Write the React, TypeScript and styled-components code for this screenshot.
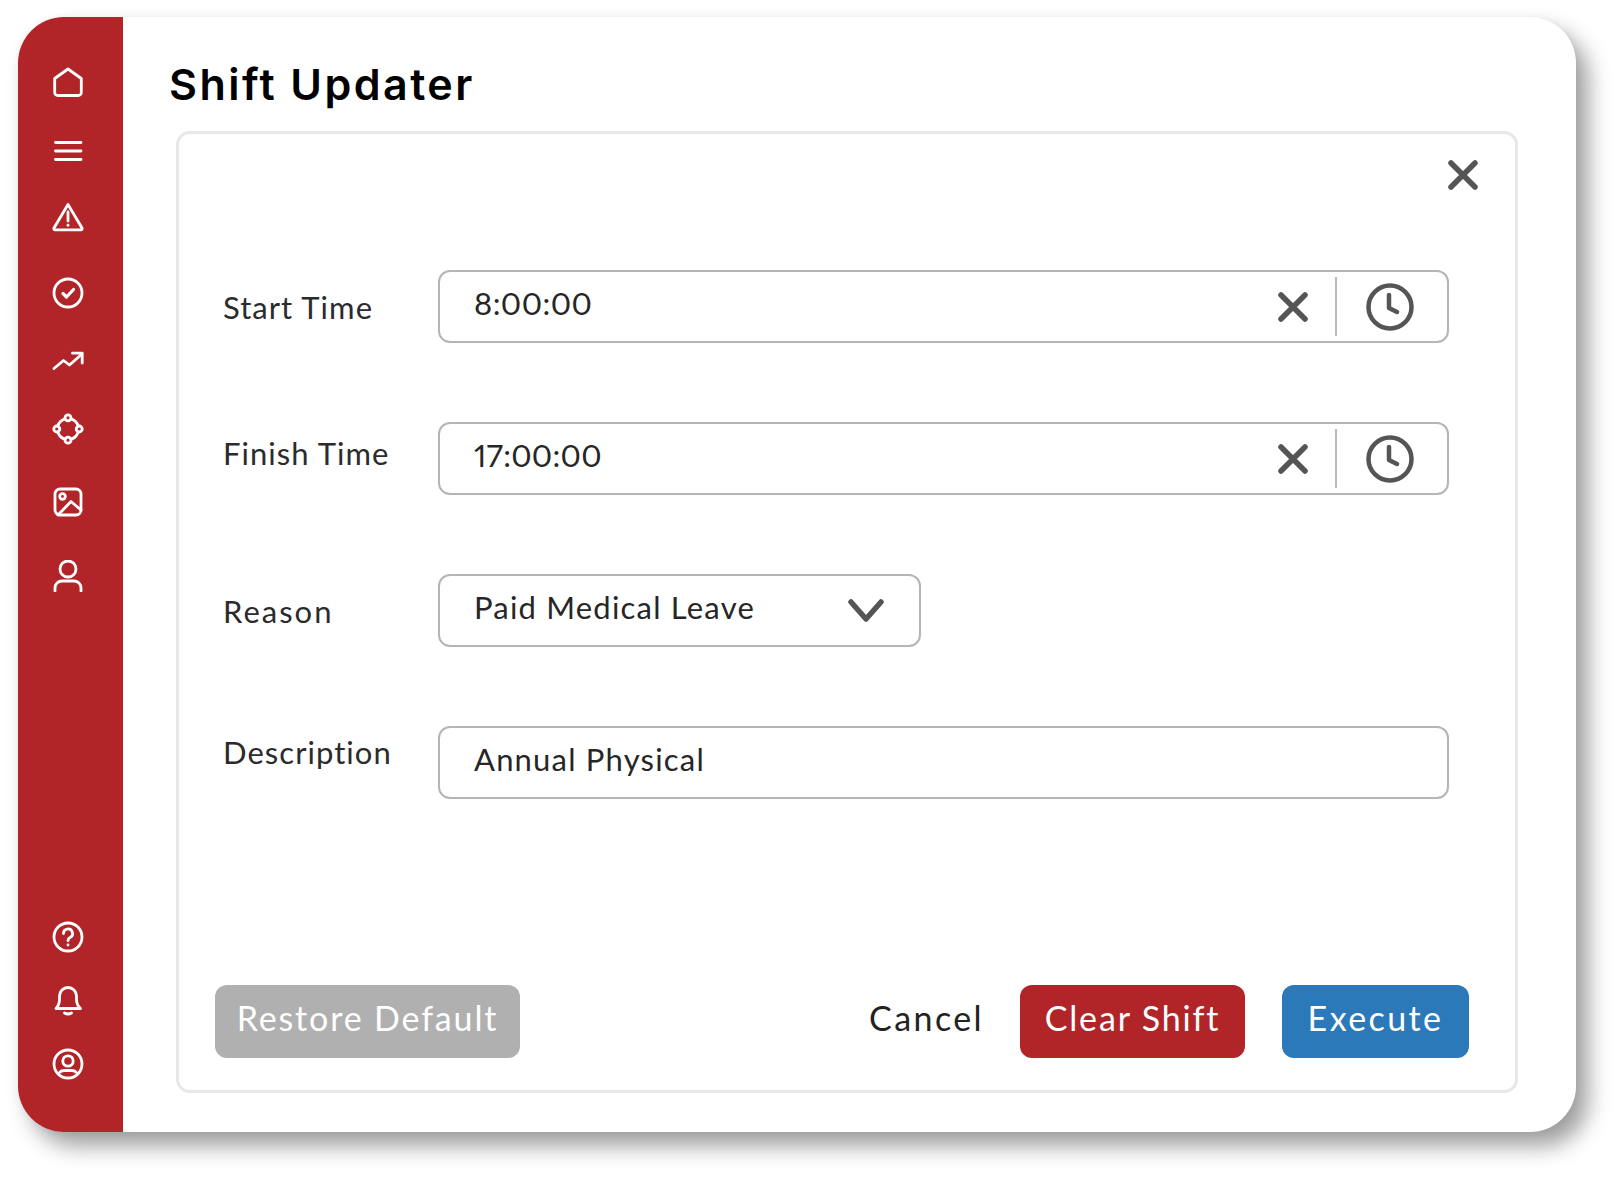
import React from "react";
import styled, { createGlobalStyle } from "styled-components";

const Global = createGlobalStyle`
  html, body { margin: 0; padding: 0; background: #fff; }
  body { font-family: "Lato", "Liberation Sans", sans-serif; }
`;

const Page = styled.div`
  width: 1624px;
  height: 1178px;
  padding: 17px 48px 46px 18px;
  box-sizing: border-box;
  overflow: hidden;
`;

const Card = styled.div`
  display: flex;
  height: 100%;
  background: #fff;
  border-radius: 46px;
  overflow: hidden;
  box-shadow: 12px 14px 22px rgba(0, 0, 0, 0.38), 0 0 8px rgba(0, 0, 0, 0.04);
`;

const Sidebar = styled.nav`
  width: 105px;
  flex: none;
  background: #b12528;
  display: flex;
  flex-direction: column;
  align-items: center;
  padding: 49px 5px 52px 0;
  box-sizing: border-box;
`;

const NavIcon = styled.svg<{ $gap?: number }>`
  width: 32px;
  height: 32px;
  flex: none;
  margin-top: ${(p) => p.$gap ?? 0}px;
  fill: none;
  stroke: #fff;
  stroke-width: 2.8;
  stroke-linecap: round;
  stroke-linejoin: round;
`;

const Spacer = styled.div`
  flex: 1;
`;

const Main = styled.main`
  flex: 1;
  display: flex;
  flex-direction: column;
  padding: 0 58px 39px 46px;
  min-width: 0;
`;

const Title = styled.h1`
  margin: 0;
  height: 114px;
  line-height: 134px;
  font-family: "Inter", "Liberation Sans", sans-serif;
  font-size: 43px;
  font-weight: 600;
  letter-spacing: 2.45px;
  color: #000;
`;

const Panel = styled.section`
  flex: 1;
  margin-left: 7px;
  border: 3px solid #e8e8e8;
  border-radius: 14px;
  display: flex;
  flex-direction: column;
  padding: 0 46px 32px 36px;
`;

const CloseRow = styled.div`
  display: flex;
  justify-content: flex-end;
  height: 136px;
  padding: 26px 0 0;
  box-sizing: border-box;
  margin-right: -9px;
`;

const Glyph = styled.svg`
  fill: none;
  stroke: #555;
  stroke-linecap: round;
  stroke-linejoin: round;
  flex: none;
`;

const Form = styled.div`
  display: grid;
  grid-template-columns: 214px 1011px;
  row-gap: 79px;
  padding-left: 9px;
`;

const Label = styled.label<{ $shift: number; $tracking?: number }>`
  align-self: center;
  margin-left: -1px;
  font-size: 31px;
  letter-spacing: ${(p) => p.$tracking ?? 1.05}px;
  color: #2b2b2b;
  padding-top: ${(p) => Math.max(p.$shift, 0)}px;
  padding-bottom: ${(p) => Math.max(-p.$shift, 0)}px;
`;

const Field = styled.div<{ $narrow?: boolean }>`
  height: 73px;
  width: ${(p) => (p.$narrow ? "483px" : "100%")};
  box-sizing: border-box;
  border: 2px solid #b5b5b5;
  border-radius: 12px;
  display: flex;
  align-items: center;
  padding-left: 34px;
`;

const Value = styled.span<{ $tracking?: number }>`
  flex: 1;
  font-size: 31px;
  letter-spacing: ${(p) => p.$tracking ?? 1.2}px;
  font-variant-numeric: proportional-nums;
  color: #262626;
  padding-bottom: 8px;
`;

const ClearGlyph = styled(Glyph)`
  width: 30px;
  height: 30px;
  stroke-width: 5.5;
`;

const Divider = styled.div`
  width: 2px;
  height: 59px;
  background: #bbb;
  margin: 0 28px 0 27px;
`;

const ClockGlyph = styled(Glyph)`
  width: 50px;
  height: 50px;
  stroke-width: 4.5;
  margin-right: 32px;
`;

const ChevronGlyph = styled(Glyph)`
  width: 38px;
  height: 26px;
  stroke-width: 5.5;
  margin-right: 34px;
`;

const Footer = styled.div`
  margin-top: auto;
  display: flex;
  align-items: center;
`;

const Button = styled.button<{ $bg: string; $width: number }>`
  width: ${(p) => p.$width}px;
  height: 73px;
  padding: 0 0 8px;
  border: 0;
  border-radius: 12px;
  background: ${(p) => p.$bg};
  color: #fff;
  font-family: inherit;
  font-size: 34px;
  letter-spacing: 1.85px;
`;

const Cancel = styled.span`
  margin-left: auto;
  margin-right: 36px;
  font-size: 34px;
  letter-spacing: 2.4px;
  color: #222;
  padding-bottom: 8px;
`;

const ExecuteButton = styled(Button)`
  margin-left: 37px;
  letter-spacing: 2.4px;
`;

const Clear = () => (
  <ClearGlyph viewBox="0 0 30 30">
    <path d="M3 3 L27 27 M27 3 L3 27" />
  </ClearGlyph>
);

const Clock = () => (
  <ClockGlyph viewBox="0 0 50 50">
    <circle cx="25" cy="25" r="21.5" />
    <path d="M24 13 V26 L32 30" />
  </ClockGlyph>
);

export default function App() {
  return (
    <Page>
      <Global />
      <Card>
        <Sidebar>
          <NavIcon viewBox="0 0 32 32">
            <path d="M2.7 12.5 L16 3 L29.3 12.5 V26.5 a3 3 0 0 1 -3 3 H5.7 a3 3 0 0 1 -3 -3 Z" />
          </NavIcon>
          <NavIcon viewBox="0 0 32 32" $gap={37}>
            <path d="M3.5 7.5 H29 M3.5 16 H29 M3.5 24.5 H29" />
          </NavIcon>
          <NavIcon viewBox="0 0 32 32" $gap={34}>
            <path d="M16 3.5 L30 27 a1.2 1.2 0 0 1 -1.2 1.8 H3.2 a1.2 1.2 0 0 1 -1.2 -1.8 Z" />
            <path d="M16 11 V20" />
            <path d="M16 24.2 V24.3" />
          </NavIcon>
          <NavIcon viewBox="0 0 32 32" $gap={44}>
            <circle cx="16" cy="16" r="14" />
            <path d="M11 16.5 L14.5 20 L21.5 12.5" strokeWidth="3.2" />
          </NavIcon>
          <NavIcon viewBox="0 0 32 32" $gap={35}>
            <path d="M2 24.5 L11.5 16.5 L17.5 21 L30 10" />
            <path d="M20.5 9.2 H30.2 V19" />
          </NavIcon>
          <NavIcon viewBox="0 0 32 32" $gap={37}>
            <circle cx="16" cy="4.8" r="3" />
            <circle cx="16" cy="27.2" r="3" />
            <circle cx="4.8" cy="16" r="3" />
            <circle cx="27.2" cy="16" r="3" />
            <path d="M13 5.8 Q7.5 7.5 5.8 13 M19 5.8 Q24.5 7.5 26.2 13 M13 26.2 Q7.5 24.5 5.8 19 M19 26.2 Q24.5 24.5 26.2 19" />
          </NavIcon>
          <NavIcon viewBox="0 0 32 32" $gap={41}>
            <rect x="3" y="3" width="26" height="26" rx="5" />
            <circle cx="10.5" cy="10.5" r="2.8" />
            <path d="M6 29 L19 15.5 L29 24" />
          </NavIcon>
          <NavIcon viewBox="0 0 32 32" $gap={42}>
            <circle cx="16" cy="9" r="8" />
            <path d="M3 31 V28 a7 7 0 0 1 7 -7 H22 a7 7 0 0 1 7 7 V31" />
          </NavIcon>
          <Spacer />
          <NavIcon viewBox="0 0 32 32">
            <circle cx="16" cy="16" r="14" />
            <path d="M11.5 12.5 a4.5 4.5 0 1 1 6.5 4 q-2 1 -2 3.2" />
            <path d="M16 24 V24.1" />
          </NavIcon>
          <NavIcon viewBox="0 0 32 32" $gap={31}>
            <path d="M4 24.5 Q7.5 21 7.5 15 V12 a8.5 8.5 0 0 1 17 0 V15 Q24.5 21 28.5 24.5 Z" />
            <path d="M12.5 29 q3.5 2 7 0" />
          </NavIcon>
          <NavIcon viewBox="0 0 32 32" $gap={32}>
            <circle cx="16" cy="16" r="14" />
            <circle cx="16" cy="13" r="5.2" />
            <path d="M7 25 q2 -2.5 5 -2.5 H20 q3 0 5 2.5" />
          </NavIcon>
        </Sidebar>
        <Main>
          <Title>Shift Updater</Title>
          <Panel>
            <CloseRow>
              <ClearGlyph viewBox="0 0 30 30">
                <path d="M3 3 L27 27 M27 3 L3 27" />
              </ClearGlyph>
            </CloseRow>
            <Form>
              <Label $shift={1}>Start Time</Label>
              <Field>
                <Value $tracking={0.45}>8:00:00</Value>
                <Clear />
                <Divider />
                <Clock />
              </Field>
              <Label $shift={-11}>Finish Time</Label>
              <Field>
                <Value $tracking={0.25}>17:00:00</Value>
                <Clear />
                <Divider />
                <Clock />
              </Field>
              <Label $shift={1} $tracking={2}>Reason</Label>
              <Field $narrow>
                <Value>Paid Medical Leave</Value>
                <ChevronGlyph viewBox="0 0 38 26">
                  <path d="M4 4 L19 21 L34 4" />
                </ChevronGlyph>
              </Field>
              <Label $shift={-22}>Description</Label>
              <Field>
                <Value>Annual Physical</Value>
              </Field>
            </Form>
            <Footer>
              <Button $bg="#b0b0b0" $width={305}>Restore Default</Button>
              <Cancel>Cancel</Cancel>
              <Button $bg="#b12528" $width={225}>Clear Shift</Button>
              <ExecuteButton $bg="#2b79b9" $width={187}>Execute</ExecuteButton>
            </Footer>
          </Panel>
        </Main>
      </Card>
    </Page>
  );
}
